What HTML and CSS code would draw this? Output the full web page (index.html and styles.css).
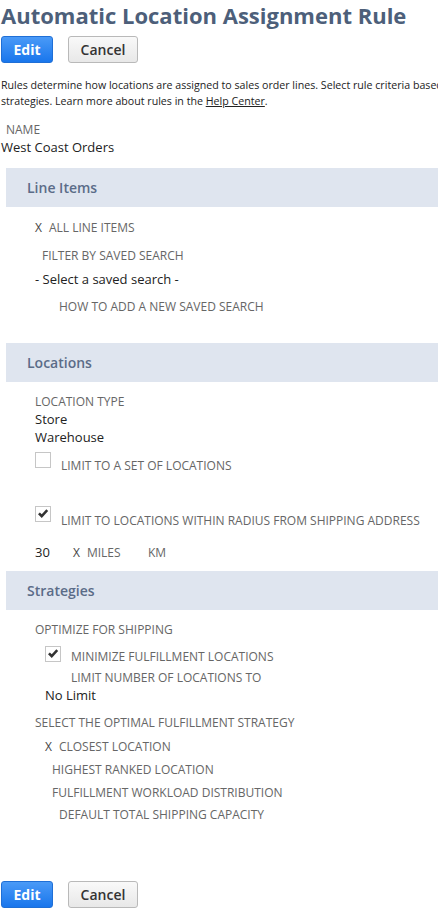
FILE: index.html
```html
<!DOCTYPE html>
<html lang="en">
<head>
<meta charset="utf-8">
<title>Automatic Location Assignment Rule</title>
<link rel="stylesheet" href="styles.css">
</head>
<body>
<div class="page">
  <h1 class="title">Automatic Location Assignment Rule</h1>
  <div class="actions">
    <button class="btn btn-primary" type="button">Edit</button>
    <button class="btn btn-secondary" type="button">Cancel</button>
  </div>
  <p class="desc">Rules determine how locations are assigned to sales order lines. Select rule criteria based on line items, locations, and fulfillment<br>strategies. Learn more about rules in the <a class="link" href="#">Help Center</a>.</p>

  <div class="name-field">
    <div class="label name-label">NAME</div>
    <div class="value name-value">West Coast Orders</div>
  </div>

  <section class="section">
    <h2 class="section-head">Line Items</h2>
    <div class="section-body">
      <div class="label row li-all"><span class="x">X</span>ALL LINE ITEMS</div>
      <div class="label row li-filter">FILTER BY SAVED SEARCH</div>
      <div class="value row li-select">- Select a saved search -</div>
      <div class="label row li-how">HOW TO ADD A NEW SAVED SEARCH</div>
    </div>
  </section>

  <section class="section sec-locations">
    <h2 class="section-head">Locations</h2>
    <div class="section-body">
      <div class="label row loc-type">LOCATION TYPE</div>
      <div class="value row">Store</div>
      <div class="value row">Warehouse</div>
      <div class="check-row loc-set">
        <span class="checkbox"></span>
        <span class="label check-label">LIMIT TO A SET OF LOCATIONS</span>
      </div>
      <div class="check-row loc-radius">
        <span class="checkbox checked"><svg viewBox="0 0 16 16" width="14" height="14"><path d="M2.3 8.3 L4.4 6.2 L6.6 8.4 L11.8 2.6 L13.9 4.7 L6.6 12.6 Z" fill="#333"/></svg></span>
        <span class="label check-label">LIMIT TO LOCATIONS WITHIN RADIUS FROM SHIPPING ADDRESS</span>
      </div>
      <div class="units-row">
        <span class="value num">30</span>
        <span class="label unit-miles"><span class="x">X</span>MILES</span>
        <span class="label unit-km">KM</span>
      </div>
    </div>
  </section>

  <section class="section sec-strategies">
    <h2 class="section-head">Strategies</h2>
    <div class="section-body">
      <div class="label row st-opt">OPTIMIZE FOR SHIPPING</div>
      <div class="check-row st-min">
        <span class="checkbox checked"><svg viewBox="0 0 16 16" width="14" height="14"><path d="M2.3 8.3 L4.4 6.2 L6.6 8.4 L11.8 2.6 L13.9 4.7 L6.6 12.6 Z" fill="#333"/></svg></span>
        <span class="label check-label">MINIMIZE FULFILLMENT LOCATIONS</span>
      </div>
      <div class="label row st-limit">LIMIT NUMBER OF LOCATIONS TO</div>
      <div class="value row st-nolimit">No Limit</div>
      <div class="label row st-select">SELECT THE OPTIMAL FULFILLMENT STRATEGY</div>
      <div class="label row st-closest"><span class="x">X</span>CLOSEST LOCATION</div>
      <div class="label row st-highest">HIGHEST RANKED LOCATION</div>
      <div class="label row st-workload">FULFILLMENT WORKLOAD DISTRIBUTION</div>
      <div class="label row st-default">DEFAULT TOTAL SHIPPING CAPACITY</div>
    </div>
  </section>

  <div class="actions actions-bottom">
    <button class="btn btn-primary" type="button">Edit</button>
    <button class="btn btn-secondary" type="button">Cancel</button>
  </div>
</div>
</body>
</html>
```
FILE: styles.css
```css
html, body {
  margin: 0;
  padding: 0;
  background: #ffffff;
  overflow: hidden;
}

body {
  font-family: "Open Sans", "Noto Sans", "Liberation Sans", sans-serif;
  color: #222;
}

.page {
  width: 760px;
  padding-left: 1px;
}

.title {
  margin: 0;
  font-size: 22px;
  font-weight: 700;
  line-height: 30px;
  color: #4d5f7a;
  white-space: nowrap;
}

.actions {
  display: flex;
  gap: 15px;
  margin-top: 6px;
}

.btn {
  font-family: "Open Sans", "Noto Sans", sans-serif;
  font-size: 14px;
  height: 27px;
  line-height: 25px;
  border-radius: 3px;
  cursor: pointer;
}

.btn-primary {
  width: 52px;
  padding: 0;
  font-weight: 700;
  color: #fff;
  border: 1px solid #1f6fd6;
  background: linear-gradient(#4a9af7, #1976ec);
}

.btn-secondary {
  width: 70px;
  padding: 0;
  font-weight: 600;
  color: #333;
  border: 1px solid #b9b9b9;
  background: linear-gradient(#f9f9f9, #e8e8e8);
}

.desc {
  margin: 14px 0 0;
  font-size: 10.65px;
  line-height: 16px;
  color: #222;
  white-space: nowrap;
}

.link {
  color: #222;
  text-decoration: underline;
}

.name-field {
  margin-top: 13px;
}

.label {
  font-size: 12px;
  line-height: 16px;
  color: #666;
  white-space: nowrap;
}

.value {
  font-size: 13px;
  line-height: 18px;
  color: #222;
  white-space: nowrap;
}

.name-label {
  padding-left: 5px;
}

.section {
  margin-top: 12px;
  padding-left: 5px;
}

.sec-locations {
  margin-top: 28px;
}

.sec-strategies {
  margin-top: 10px;
}

.section-head {
  margin: 0;
  height: 39px;
  display: flex;
  align-items: center;
  padding-left: 21px;
  background: #dfe5ef;
  font-size: 14px;
  font-weight: 600;
  color: #5b6c88;
}

.section-body {
  padding-left: 29px;
}

.row {
  display: block;
}

.x {
  color: #444;
  margin-right: 7px;
}

.li-all { margin-top: 13px; }
.li-filter { margin-top: 12px; padding-left: 7px; }
.li-select { margin-top: 6px; }
.li-how { margin-top: 11px; padding-left: 24px; }

.loc-type { margin-top: 12px; }

.check-row {
  display: flex;
  align-items: flex-start;
  gap: 10px;
}

.checkbox {
  flex: none;
  width: 14px;
  height: 14px;
  border: 1px solid #c6c6c6;
  background: #fff;
  display: flex;
  align-items: center;
  justify-content: center;
}

.check-label {
  padding-top: 6px;
}

.loc-set { margin-top: 6px; }
.loc-radius { margin-top: 32px; }
.loc-radius .check-label { padding-top: 7px; }

.units-row {
  display: flex;
  align-items: baseline;
  margin-top: 14px;
}

.num { width: 38px; }
.unit-miles { width: 75px; }

.st-opt { margin-top: 12px; }
.st-min { margin-top: 8px; padding-left: 10px; }
.st-min .check-label { padding-top: 3px; }
.st-limit { margin-top: 5px; padding-left: 36px; }
.st-nolimit { margin-top: 0; padding-left: 10px; }
.st-select { margin-top: 11px; }
.st-closest { margin-top: 8px; padding-left: 10px; }
.st-highest { margin-top: 7px; padding-left: 17px; }
.st-workload { margin-top: 7px; padding-left: 17px; }
.st-default { margin-top: 6px; padding-left: 24px; }

.actions-bottom {
  margin-top: 58px;
}
```
